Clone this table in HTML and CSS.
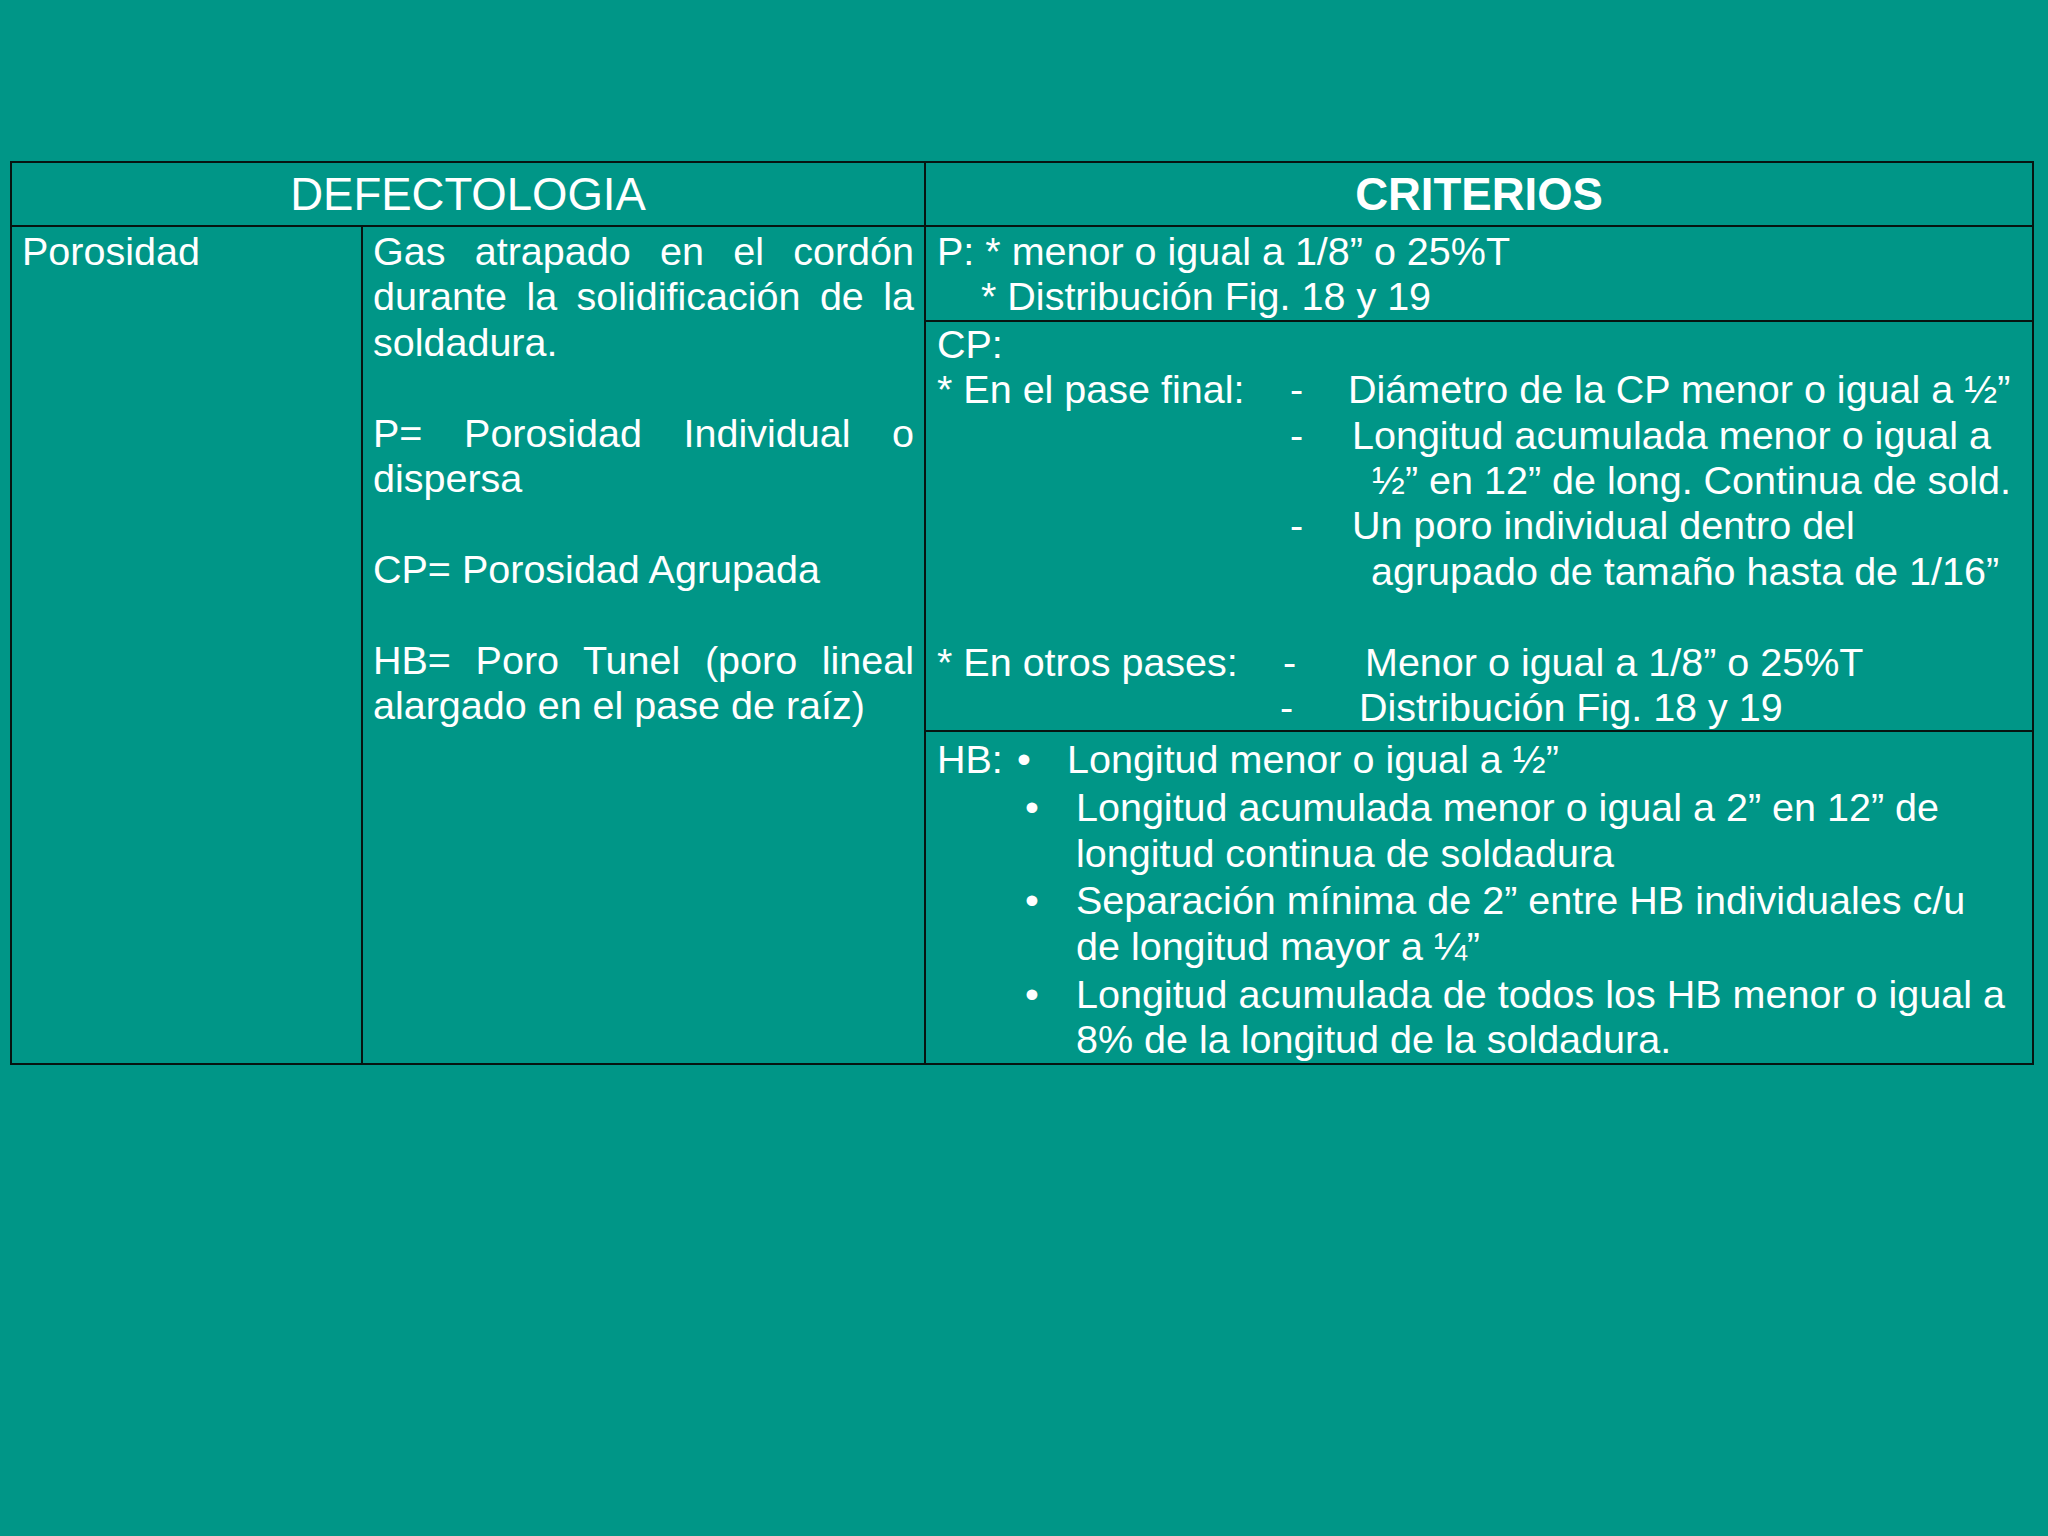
FILE: index.html
```html
<!DOCTYPE html>
<html lang="es">
<head>
<meta charset="utf-8">
<title>Defectologia - Porosidad</title>
<link rel="stylesheet" href="styles.css">
</head>
<body>
<main class="slide">
  <table class="grid">
    <colgroup>
      <col class="c1">
      <col class="c2">
      <col class="c3">
    </colgroup>
    <tr class="r-head">
      <th colspan="2" class="h-def">DEFECTOLOGIA</th>
      <th class="h-cri">CRITERIOS</th>
    </tr>
    <tr class="r-p">
      <td rowspan="3" class="name">Porosidad</td>
      <td rowspan="3" class="desc">
        <p>Gas atrapado en el cordón durante la solidificación de la soldadura.</p>
        <p>P= Porosidad Individual o dispersa</p>
        <p>CP= Porosidad Agrupada</p>
        <p>HB= Poro Tunel (poro lineal alargado en el pase de raíz)</p>
      </td>
      <td class="crit">
        <div class="line">P: * menor o igual a 1/8” o 25%T</div>
        <div class="line in-p">* Distribución Fig. 18 y 19</div>
      </td>
    </tr>
    <tr class="r-cp">
      <td class="crit cp">
        <div class="line">CP:</div>
        <div class="line"><span class="lead lead-a">* En el pase final:</span><span class="dash d1">-</span><span>Diámetro de la CP menor o igual a ½”</span></div>
        <div class="line"><span class="lead lead-a"></span><span class="dash d2">-</span><span>Longitud acumulada menor o igual a</span></div>
        <div class="line in-a">½” en 12” de long. Continua de sold.</div>
        <div class="line"><span class="lead lead-a"></span><span class="dash d2">-</span><span>Un poro individual dentro del</span></div>
        <div class="line in-b">agrupado de tamaño hasta de 1/16”</div>
        <div class="line">&nbsp;</div>
        <div class="line"><span class="lead lead-b">* En otros pases:</span><span class="dash d3">-</span><span>Menor o igual a 1/8” o 25%T</span></div>
        <div class="line"><span class="lead lead-c"></span><span class="dash d4">-</span><span>Distribución Fig. 18 y 19</span></div>
      </td>
    </tr>
    <tr class="r-hb">
      <td class="crit hb">
        <div class="item first"><span class="hb-lbl">HB:</span><span class="bul b1">•</span><span class="txt">Longitud menor o igual a ½”</span></div>
        <div class="item"><span class="bul">•</span><span class="txt">Longitud acumulada menor o igual a 2” en 12” de<br>longitud continua de soldadura</span></div>
        <div class="item"><span class="bul">•</span><span class="txt">Separación mínima de 2” entre HB individuales c/u<br>de longitud mayor a ¼”</span></div>
        <div class="item"><span class="bul">•</span><span class="txt">Longitud acumulada de todos los HB menor o igual a<br>8% de la longitud de la soldadura.</span></div>
      </td>
    </tr>
  </table>
</main>
</body>
</html>
```

FILE: styles.css
```css
html, body {
  margin: 0;
  padding: 0;
  background: #009687;
}

body {
  width: 2048px;
  height: 1536px;
  overflow: hidden;
  font-family: "Liberation Sans", Arial, sans-serif;
  color: #ffffff;
}

.slide {
  padding: 161px 0 0 10px;
}

.grid {
  border-collapse: collapse;
  table-layout: fixed;
  width: 2022px;
  font-size: 39.5px;
  line-height: 45.4px;
}

.c1 { width: 351px; }
.c2 { width: 563px; }
.c3 { width: 1108px; }

.grid th,
.grid td {
  border: 2px solid #071410;
  padding: 0;
  vertical-align: top;
}

.r-head { height: 64px; }
.r-p { height: 93px; }
.r-cp { height: 410px; }
.r-hb { height: 333px; }

.grid th {
  font-size: 45.5px;
  line-height: 52px;
  vertical-align: middle;
  text-align: center;
  padding-top: 1px;
}

.h-def { font-weight: normal; }
.h-cri { font-weight: bold; }

.name {
  padding: 2px 10px 0 10px !important;
}

.desc {
  padding: 2px 10px 0 10px !important;
  text-align: justify;
}

.desc p {
  margin: 0 0 45.4px 0;
}

.crit {
  padding: 2px 12px 0 11px !important;
  white-space: nowrap;
}

.crit.cp { padding-top: 0 !important; }

.line {
  display: flex;
  height: 45.4px;
}

.in-p { padding-left: 44px; }
.in-a { padding-left: 435px; }
.in-b { padding-left: 434px; }

.lead { display: inline-block; }
.lead-a { width: 353px; }
.lead-b { width: 346px; }
.lead-c { width: 343px; }

.dash { display: inline-block; }
.d1 { width: 58px; }
.d2 { width: 62px; }
.d3 { width: 82px; }
.d4 { width: 79px; }

.crit.hb { padding-top: 5px !important; }

.item {
  display: flex;
  padding-left: 88px;
  margin-top: 2.4px;
}

.item.first {
  padding-left: 0;
  margin-top: 0;
}

.hb-lbl {
  display: inline-block;
  width: 80px;
}

.bul {
  display: inline-block;
  width: 51px;
  flex: none;
}

.b1 { width: 50px; }

.txt { display: block; }
```
